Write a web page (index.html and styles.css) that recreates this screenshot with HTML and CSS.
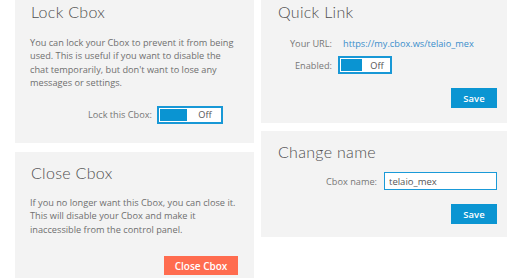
FILE: index.html
```html
<!DOCTYPE html>
<html>
<head>
	<title>Cbox settings</title>
	<link rel="stylesheet" href="styles.css">
</head>
<body>
	<div class="page">
		<div class="col col-left">
			<section class="panel">
				<h2>Lock Cbox</h2>
				<p>You can lock your Cbox to prevent it from being used. This is useful if you want to disable the chat temporarily, but don't want to lose any messages or settings.</p>
				<div class="row row-lock">
					<label>Lock this Cbox:</label>
					<span class="toggle"><span class="knob"></span><span class="state">Off</span></span>
				</div>
			</section>
			<section class="panel panel-close">
				<h2>Close Cbox</h2>
				<p>If you no longer want this Cbox, you can close it. This will disable your Cbox and make it inaccessible from the control panel.</p>
				<div class="actions">
					<button class="btn btn-red">Close Cbox</button>
				</div>
			</section>
		</div>
		<div class="col col-right">
			<section class="panel panel-r">
				<h2>Quick Link</h2>
				<div class="row row-link">
					<label>Your URL:</label>
					<a class="url" href="#">https://my.cbox.ws/telaio_mex</a>
				</div>
				<div class="row row-link">
					<label>Enabled:</label>
					<span class="toggle toggle-sm"><span class="knob"></span><span class="state">Off</span></span>
				</div>
				<div class="actions">
					<button class="btn">Save</button>
				</div>
			</section>
			<section class="panel panel-r panel-name">
				<h2>Change name</h2>
				<div class="row row-name">
					<label>Cbox name:</label>
					<input type="text" value="telaio_mex">
				</div>
				<div class="actions">
					<button class="btn">Save</button>
				</div>
			</section>
		</div>
	</div>
</body>
</html>
```

FILE: styles.css
```css
html, body{
	overflow: hidden;
}
body{
	margin:0;
	padding:0;
	height: 278px;
	background-color: #fff;
	font-family: "Open Sans", "Liberation Sans", sans-serif;
	font-size: 9.2px;
	color: #6f6f6f;
}
.page{
	display: flex;
	gap: 7px;
	margin-top: -9px;
	padding-left: 15px;
}
.col{
	display: flex;
	flex-direction: column;
}
.col-left{
	width: 239px;
	gap: 9px;
}
.col-right{
	width: 246px;
	gap: 8px;
}
.panel{
	background-color: #f3f3f3;
	padding: 12px 14px 19px 15px;
}
.panel h2{
	margin: 0;
	font-family: Lato, "Open Sans", sans-serif;
	font-weight: 300;
	font-size: 16px;
	line-height: 18px;
	color: #4f4f4f;
	padding-left: 1px;
	letter-spacing: 0.3px;
}
.panel p{
	margin: 15px 0 0;
	line-height: 13.4px;
}
.row{
	display: flex;
	align-items: center;
	height: 18px;
}
.row label{
	text-align: right;
	color: #777;
}
.row-lock{
	margin-top: 16px;
	gap: 5px;
}
.row-lock label{
	width: 122px;
}
/* toggle */
.toggle{
	display: flex;
	align-items: center;
	box-sizing: border-box;
	width: 66px;
	height: 18px;
	padding: 1px;
	border: 2px solid #1898d6;
	background-color: #fff;
}
.toggle .knob{
	width: 27px;
	height: 12px;
	background-color: #0a94d2;
}
.toggle .state{
	flex: 1;
	text-align: center;
	padding-left: 3px;
	color: #555;
}
.toggle-sm{
	width: 54px;
}
.toggle-sm .knob{
	width: 21px;
}
.actions{
	display: flex;
	justify-content: flex-end;
}
.btn{
	border: none;
	padding: 0;
	width: 46px;
	height: 20px;
	font-family: "Open Sans", sans-serif;
	font-size: 9.5px;
	font-weight: 600;
	color: #fff;
	background-color: #0b95d2;
}
.panel-close{
	flex: 1;
	padding-right: 16px;
}
.panel-close p{
	margin-top: 14px;
	line-height: 13.5px;
}
.panel-close .actions{
	margin-top: 20px;
}
.btn-red{
	width: 74px;
	height: 19px;
	font-size: 10px;
	background-color: #ff6c4f;
}
.panel-r{
	padding: 12px 10px 15px 17px;
}
.panel-r h2{
	padding-left: 0;
}
.row-link{
	gap: 6px;
}
.row-link label{
	width: 54px;
}
.panel-r h2 + .row-link{
	margin-top: 13px;
}
.row-link + .row-link{
	margin-top: 4px;
}
.url{
	padding-left: 5px;
	color: #3a8ecb;
	text-decoration: none;
}
.panel-r .actions{
	margin-top: 14px;
}
.panel-name{
	padding-bottom: 13px;
}
.row-name{
	margin-top: 11px;
	gap: 7px;
}
.row-name label{
	width: 99px;
}
.row-name input{
	box-sizing: border-box;
	width: 113px;
	height: 18px;
	margin: 0;
	padding: 0 4px;
	border: 1px solid #1a9ad8;
	font-family: "Open Sans", sans-serif;
	font-size: 9.5px;
	color: #555;
	background-color: #fff;
	outline: none;
}
```
